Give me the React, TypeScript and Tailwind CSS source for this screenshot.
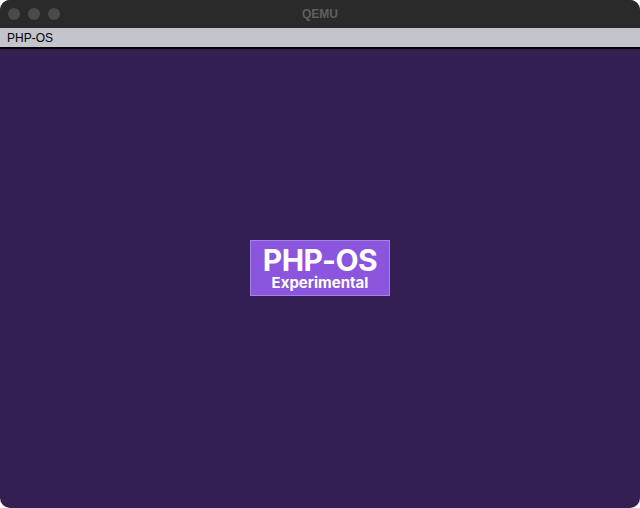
import React from "react";

const App = () => {
  return (
    <div className="w-[640px] h-[508px] bg-white font-['Liberation_Sans',sans-serif]">
      <div className="w-full h-full flex flex-col rounded-[10px] overflow-hidden bg-[#341f52]">
        {/* TITLE BAR */}
        <div className="relative h-[28px] bg-[#2a2a2a] flex items-center px-[8px] gap-[8px]">
          <div className="w-[12px] h-[12px] rounded-full bg-[#4b4b4b]" />
          <div className="w-[12px] h-[12px] rounded-full bg-[#4b4b4b]" />
          <div className="w-[12px] h-[12px] rounded-full bg-[#4b4b4b]" />
          <div className="absolute inset-0 flex items-center justify-center text-[12px] font-bold text-[#5f5f5f]">
            QEMU
          </div>
        </div>
        {/* MENU */}
        <div className="h-[19px] bg-[#c4c4cd] flex items-center px-[7px] text-[12px] text-black border-b-[2px] border-black box-content">
          PHP-OS
        </div>
        {/* SCREEN */}
        <div className="flex-1 flex items-center justify-center">
          <div className="w-[140px] h-[56px] mt-[-22px] bg-[#8b55dd] border border-[#a67de9] flex flex-col items-center justify-center font-['Inter',sans-serif] text-white">
            <span className="text-[30px] leading-[30px] font-bold tracking-[-0.5px]">PHP-OS</span>
            <span className="text-[15px] leading-[16px] font-bold">Experimental</span>
          </div>
        </div>
      </div>
    </div>
  );
};

export default App;
